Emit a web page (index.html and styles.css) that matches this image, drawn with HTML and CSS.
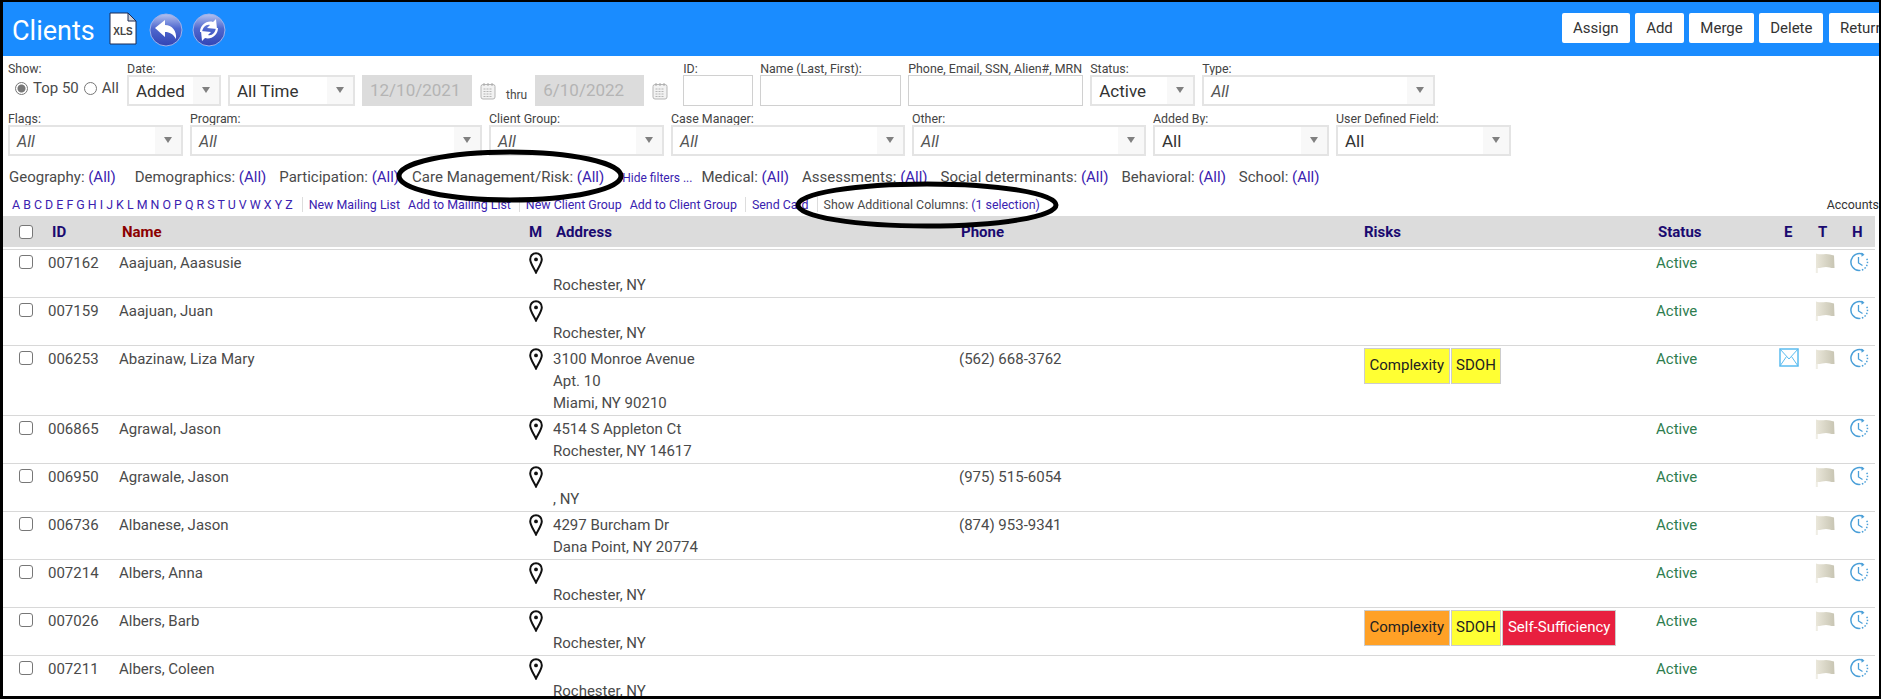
FILE: index.html
```
<!DOCTYPE html>
<html lang="en">

<head>
  <meta charset="UTF-8" />
  <title>Clients</title>
  <link rel="stylesheet" href="styles.css">
</head>

<body>
  <svg class="defs" width="0" height="0">
    <defs>
      <linearGradient id="ball" x1="0" y1="0" x2="0" y2="1">
        <stop offset="0" stop-color="#b4c3f0" />
        <stop offset="0.45" stop-color="#4f68cf" />
        <stop offset="1" stop-color="#3244b4" />
      </linearGradient>
      <linearGradient id="cloth" x1="0" y1="0" x2="1" y2="0">
        <stop offset="0" stop-color="#eae7da" />
        <stop offset="1" stop-color="#c8c5b3" />
      </linearGradient>
      <symbol id="pin" viewBox="0 0 14 22">
        <path d="M7 1.2C3.6 1.2 1.2 3.9 1.2 7.2c0 4 3.7 8.600 5.800 13.300 2.100-4.700 5.800-9.300 5.800-13.300C12.800 3.900 10.400 1.200 7 1.200z" fill="none" stroke="#111" stroke-width="2" />
        <circle cx="7" cy="7.400" r="1.900" fill="#111" />
      </symbol>
      <symbol id="flag" viewBox="0 0 22 22">
        <path d="M2 1.500c5 1.500 7 .5 10 .5 3 0 5 1 8 1.500L20.500 16c-3 .5-5.500-1-8.500-1-3 0-6 1.500-10 1z" fill="url(#cloth)" />
        <path d="M2.800 16v5" stroke="#efede4" stroke-width="2" />
      </symbol>
      <symbol id="clock" viewBox="0 0 20 20">
        <path d="M14 2.300A8.500 8.500 0 1 0 10 18.500" fill="none" stroke="#4a9fd8" stroke-width="1.500" />
        <path d="M10 18.500A8.500 8.500 0 0 0 17.500 6" fill="none" stroke="#4a9fd8" stroke-width="1.500" stroke-dasharray="1.500 1.500" />
        <path d="M12.500 .5L15.500 2.800 12.500 4.800z" fill="#4a9fd8" />
        <path d="M9.500 5v6l4 2.500" fill="none" stroke="#4a9fd8" stroke-width="1.300" />
      </symbol>
      <symbol id="cal" viewBox="0 0 16 18">
        <rect x="1" y="2.500" width="14" height="14.500" rx="2" fill="#f2f2f2" stroke="#b5b5b5" />
        <path d="M4 1v3M8 1v3M12 1v3" stroke="#aaa" />
        <path d="M3.500 7h9M3.500 9.500h9M3.500 12h9M3.500 14.500h9" stroke="#b5b5b5" stroke-dasharray="2 1" />
      </symbol>
    </defs>
  </svg>

  <div class="frame">
    <div class="topbar">
      <div class="page-title">Clients</div>
      <svg class="xls-icon" width="28" height="33" viewBox="0 0 28 33">
        <path d="M1 1h18l8 8v23H1z" fill="#fff" stroke="#1b2a55" />
        <path d="M19 1v8h8z" fill="#c9ced8" stroke="#1b2a55" />
        <text x="14" y="23" text-anchor="middle" class="xls-text">XLS</text>
      </svg>
      <svg class="round-icon" width="34" height="34" viewBox="0 0 34 34">
        <circle cx="17" cy="17" r="16" fill="url(#ball)" stroke="#9fb2ea" />
        <path d="M6 15l10-8v5c7 0 12 6 11 14-3-5-6-7-11-7v5z" fill="#fff" />
      </svg>
      <svg class="round-icon" width="34" height="34" viewBox="0 0 34 34">
        <circle cx="17" cy="17" r="16" fill="url(#ball)" stroke="#9fb2ea" />
        <path d="M8 19c0-7 7-12 13-10l3-3 1 10-10-1 3-3c-4-1-7 2-8 7z" fill="#fff" />
        <path d="M26 15c0 7-7 12-13 10l-3 3-1-10 10 1-3 3c4 1 7-2 8-7z" fill="#fff" />
      </svg>
      <div class="actions">
        <a class="btn">Assign</a>
        <a class="btn">Add</a>
        <a class="btn">Merge</a>
        <a class="btn">Delete</a>
        <a class="btn">Return</a>
      </div>
    </div>

    <div class="filters">
      <div class="filter-row">
        <div class="field w-show">
          <label>Show:</label>
          <div class="radios">
            <span class="radio on"></span><span>Top 50</span>
            <span class="radio"></span><span>All</span>
          </div>
        </div>
        <div class="field">
          <label>Date:</label>
          <div class="controls">
            <div class="drop w-added"><span>Added</span><i></i></div>
            <div class="drop w-time"><span>All Time</span><i></i></div>
            <div class="date-input w-from">12/10/2021</div>
            <svg class="cal" width="16" height="18"><use href="#cal" /></svg>
            <span class="thru">thru</span>
            <div class="date-input w-to">6/10/2022</div>
            <svg class="cal" width="16" height="18"><use href="#cal" /></svg>
          </div>
        </div>
        <div class="field w-id">
          <label>ID:</label>
          <div class="text-input"></div>
        </div>
        <div class="field w-name">
          <label>Name (Last, First):</label>
          <div class="text-input"></div>
        </div>
        <div class="field w-phone">
          <label>Phone, Email, SSN, Alien#, MRN</label>
          <div class="text-input"></div>
        </div>
        <div class="field w-status">
          <label>Status:</label>
          <div class="drop"><span>Active</span><i></i></div>
        </div>
        <div class="field w-type">
          <label>Type:</label>
          <div class="drop"><em>All</em><i></i></div>
        </div>
      </div>

      <div class="filter-row">
        <div class="field w-flags">
          <label>Flags:</label>
          <div class="drop"><em>All</em><i></i></div>
        </div>
        <div class="field w-program">
          <label>Program:</label>
          <div class="drop"><em>All</em><i></i></div>
        </div>
        <div class="field w-group">
          <label>Client Group:</label>
          <div class="drop"><em>All</em><i></i></div>
        </div>
        <div class="field w-manager">
          <label>Case Manager:</label>
          <div class="drop"><em>All</em><i></i></div>
        </div>
        <div class="field w-other">
          <label>Other:</label>
          <div class="drop"><em>All</em><i></i></div>
        </div>
        <div class="field w-added-by">
          <label>Added By:</label>
          <div class="drop"><span>All</span><i></i></div>
        </div>
        <div class="field w-udf">
          <label>User Defined Field:</label>
          <div class="drop"><span>All</span><i></i></div>
        </div>
      </div>
    </div>

    <div class="facets">
      <span class="first-facet">Geography: <a>(All)</a></span>
      <span>Demographics: <a>(All)</a></span>
      <span>Participation: <a>(All)</a></span>
      <span>Care Management/Risk: <a>(All)</a></span>
      <a class="hide-link">Hide filters ...</a>
      <span>Medical: <a>(All)</a></span>
      <span>Assessments: <a>(All)</a></span>
      <span>Social determinants: <a>(All)</a></span>
      <span>Behavioral: <a>(All)</a></span>
      <span>School: <a>(All)</a></span>
    </div>

    <div class="links">
      <a class="alpha">A B C D E F G H I J K L M N O P Q R S T U V W X Y Z</a>
      <a class="sep">New Mailing List</a>
      <a>Add to Mailing List</a>
      <a class="sep">New Client Group</a>
      <a>Add to Client Group</a>
      <a class="sep">Send Card</a>
      <span class="sep">Show Additional Columns: <a>(1 selection)</a></span>
      <span class="accounts">Accounts:</span>
    </div>

    <table class="clients">
      <colgroup>
        <col class="col-chk"><col class="col-id"><col class="col-name"><col class="col-m"><col class="col-addr"><col class="col-phone"><col class="col-risk"><col class="col-status"><col class="col-e"><col class="col-t"><col class="col-h">
      </colgroup>
      <thead>
        <tr>
          <th class="chk"><span class="box"></span></th>
          <th class="th-id">ID</th>
          <th class="th-name sorted">Name</th>
          <th>M</th>
          <th class="th-addr">Address</th>
          <th class="th-phone">Phone</th>
          <th class="th-risk">Risks</th>
          <th class="th-status">Status</th>
          <th class="th-e">E</th>
          <th class="th-t">T</th>
          <th class="th-h">H</th>
        </tr>
      </thead>
      <tbody>
        <tr>
          <td class="chk"><span class="box"></span></td><td>007162</td><td>Aaajuan, Aaasusie</td>
          <td><svg class="pin" width="14" height="22"><use href="#pin" /></svg></td>
          <td><br>Rochester, NY</td><td class="phone"></td><td class="risk"></td><td class="status">Active</td><td></td>
          <td class="ico"><svg width="22" height="22"><use href="#flag" /></svg></td>
          <td class="ico"><svg width="20" height="20"><use href="#clock" /></svg></td>
        </tr>
        <tr>
          <td class="chk"><span class="box"></span></td><td>007159</td><td>Aaajuan, Juan</td>
          <td><svg class="pin" width="14" height="22"><use href="#pin" /></svg></td>
          <td><br>Rochester, NY</td><td class="phone"></td><td class="risk"></td><td class="status">Active</td><td></td>
          <td class="ico"><svg width="22" height="22"><use href="#flag" /></svg></td>
          <td class="ico"><svg width="20" height="20"><use href="#clock" /></svg></td>
        </tr>
        <tr>
          <td class="chk"><span class="box"></span></td><td>006253</td><td>Abazinaw, Liza Mary</td>
          <td><svg class="pin" width="14" height="22"><use href="#pin" /></svg></td>
          <td>3100 Monroe Avenue<br>Apt. 10<br>Miami, NY 90210</td><td class="phone">(562) 668-3762</td>
          <td class="risk"><div class="chips"><span class="chip yellow">Complexity</span><span class="chip yellow">SDOH</span></div></td>
          <td class="status">Active</td>
          <td class="ico">
            <svg width="20" height="19" viewBox="0 0 20 19">
              <rect x="1" y="1" width="18" height="17" fill="none" stroke="#5bbcf0" stroke-width="1.500" />
              <path d="M1 1l9 10 9-10M1 18l6.500-9.500M19 18l-6.500-9.500" fill="none" stroke="#5bbcf0" />
            </svg>
          </td>
          <td class="ico"><svg width="22" height="22"><use href="#flag" /></svg></td>
          <td class="ico"><svg width="20" height="20"><use href="#clock" /></svg></td>
        </tr>
        <tr>
          <td class="chk"><span class="box"></span></td><td>006865</td><td>Agrawal, Jason</td>
          <td><svg class="pin" width="14" height="22"><use href="#pin" /></svg></td>
          <td>4514 S Appleton Ct<br>Rochester, NY 14617</td><td class="phone"></td><td class="risk"></td><td class="status">Active</td><td></td>
          <td class="ico"><svg width="22" height="22"><use href="#flag" /></svg></td>
          <td class="ico"><svg width="20" height="20"><use href="#clock" /></svg></td>
        </tr>
        <tr>
          <td class="chk"><span class="box"></span></td><td>006950</td><td>Agrawale, Jason</td>
          <td><svg class="pin" width="14" height="22"><use href="#pin" /></svg></td>
          <td><br>, NY</td><td class="phone">(975) 515-6054</td><td class="risk"></td><td class="status">Active</td><td></td>
          <td class="ico"><svg width="22" height="22"><use href="#flag" /></svg></td>
          <td class="ico"><svg width="20" height="20"><use href="#clock" /></svg></td>
        </tr>
        <tr>
          <td class="chk"><span class="box"></span></td><td>006736</td><td>Albanese, Jason</td>
          <td><svg class="pin" width="14" height="22"><use href="#pin" /></svg></td>
          <td>4297 Burcham Dr<br>Dana Point, NY 20774</td><td class="phone">(874) 953-9341</td><td class="risk"></td><td class="status">Active</td><td></td>
          <td class="ico"><svg width="22" height="22"><use href="#flag" /></svg></td>
          <td class="ico"><svg width="20" height="20"><use href="#clock" /></svg></td>
        </tr>
        <tr>
          <td class="chk"><span class="box"></span></td><td>007214</td><td>Albers, Anna</td>
          <td><svg class="pin" width="14" height="22"><use href="#pin" /></svg></td>
          <td><br>Rochester, NY</td><td class="phone"></td><td class="risk"></td><td class="status">Active</td><td></td>
          <td class="ico"><svg width="22" height="22"><use href="#flag" /></svg></td>
          <td class="ico"><svg width="20" height="20"><use href="#clock" /></svg></td>
        </tr>
        <tr>
          <td class="chk"><span class="box"></span></td><td>007026</td><td>Albers, Barb</td>
          <td><svg class="pin" width="14" height="22"><use href="#pin" /></svg></td>
          <td><br>Rochester, NY</td><td class="phone"></td>
          <td class="risk"><div class="chips"><span class="chip orange">Complexity</span><span class="chip yellow">SDOH</span><span class="chip red">Self-Sufficiency</span></div></td>
          <td class="status">Active</td><td></td>
          <td class="ico"><svg width="22" height="22"><use href="#flag" /></svg></td>
          <td class="ico"><svg width="20" height="20"><use href="#clock" /></svg></td>
        </tr>
        <tr>
          <td class="chk"><span class="box"></span></td><td>007211</td><td>Albers, Coleen</td>
          <td><svg class="pin" width="14" height="22"><use href="#pin" /></svg></td>
          <td><br>Rochester, NY</td><td class="phone"></td><td class="risk"></td><td class="status">Active</td><td></td>
          <td class="ico"><svg width="22" height="22"><use href="#flag" /></svg></td>
          <td class="ico"><svg width="20" height="20"><use href="#clock" /></svg></td>
        </tr>
      </tbody>
    </table>

    <!-- hand drawn marks on top of the screen -->
    <svg class="marks" width="1881" height="699">
      <ellipse cx="510" cy="176" rx="111" ry="24" />
      <ellipse cx="927" cy="205" rx="129" ry="21" />
    </svg>
  </div>
</body>

</html>
```

FILE: styles.css
```
* {
  box-sizing: border-box;
}

body {
  margin: 0;
  padding: 0;
  background: #fff;
  font-family: "Roboto", "Liberation Sans", sans-serif;
  font-size: 15px;
  color: #4a4a4a;
}

a {
  color: #3a22b0;
  text-decoration: none;
}

.defs {
  position: absolute;
}

.frame {
  position: relative;
  width: 1881px;
  height: 699px;
  border-style: solid;
  border-color: #000;
  border-width: 2px 2px 3px 3px;
  overflow: hidden;
}

.marks {
  position: absolute;
  top: -2px;
  left: -3px;
  fill: none;
  stroke: #000;
  stroke-width: 5;
}

/* top bar */
.topbar {
  display: flex;
  align-items: flex-start;
  height: 54px;
  padding-left: 9px;
  background-color: #1a8cff;
}

.page-title {
  width: 97px;
  margin-top: 10px;
  font-size: 27px;
  line-height: 38px;
  color: #fff;
}

.xls-icon {
  flex: none;
  margin-top: 10px;
}

.xls-text {
  font-family: "Liberation Sans", sans-serif;
  font-size: 10px;
  font-weight: bold;
  fill: #444;
}

.round-icon {
  flex: none;
  margin-top: 11px;
  margin-left: 9px;
}

.xls-icon + .round-icon {
  margin-left: 12px;
}

.actions {
  flex: none;
  display: flex;
  gap: 5.5px;
  width: 317px;
  margin-top: 11px;
  margin-left: auto;
  overflow: hidden;
}

.btn {
  flex: none;
  height: 30px;
  padding: 0 11px;
  line-height: 30px;
  background-color: #fff;
  border-radius: 2px;
  color: #333;
}

/* filter block */
.filters {
  padding: 4px 0 0 5px;
}

.filter-row {
  display: flex;
  gap: 7px;
  height: 50px;
}

.field {
  flex: none;
}

.field label {
  display: block;
  height: 15px;
  padding-top: 1px;
  font-size: 12.4px;
  line-height: 15px;
  color: #444;
  white-space: nowrap;
}

.controls {
  display: flex;
  align-items: center;
  gap: 7px;
}

.radios {
  display: flex;
  align-items: center;
  gap: 5px;
  height: 26px;
  padding-left: 7px;
  font-size: 15px;
}

.radio {
  width: 13px;
  height: 13px;
  border: 1px solid #777;
  border-radius: 50%;
  background: #fff;
}

.radio.on {
  border-color: #777;
  background: radial-gradient(circle, #777 0, #777 3.5px, #fff 4.5px);
}

.drop {
  position: relative;
  height: 31px;
  padding-left: 7px;
  line-height: 28px;
  font-size: 17px;
  color: #333;
  background-color: #fff;
  border: 2px solid #e4e4e4;
}

.drop em {
  font-size: 16px;
  color: #555;
}

.drop i {
  position: absolute;
  top: 0;
  right: 0;
  bottom: 0;
  width: 26px;
  background-color: #f8f8f8;
}

.drop i::after {
  content: "";
  position: absolute;
  top: 10px;
  left: 9px;
  border-style: solid;
  border-color: #808080 transparent transparent;
  border-width: 6px 4px 0;
}

.date-input {
  height: 31px;
  padding-left: 8px;
  line-height: 31px;
  font-size: 17px;
  color: #b4b4b4;
  background-color: #dcdcdc;
}

.text-input {
  height: 31px;
  background-color: #fff;
  border: 1px solid #d0d0d0;
}

.cal {
  flex: none;
  margin-left: 1px;
}

.thru {
  margin: 8px 1px 0 3px;
  font-size: 12px;
}

.w-show { width: 112px; }
.w-added { width: 94px; }
.w-time { width: 127px; }
.w-from { width: 110px; }
.w-to { width: 109px; }
.w-id { width: 70px; margin-left: 8px; }
.w-name { width: 141px; }
.w-phone { width: 175px; }
.w-status { width: 105px; }
.w-type { width: 233px; }
.w-flags { width: 175px; }
.w-program { width: 292px; }
.w-group { width: 175px; }
.w-manager { width: 234px; }
.w-other { width: 234px; }
.w-added-by { width: 176px; }
.w-udf { width: 175px; }

/* facet links */
.facets {
  display: flex;
  align-items: center;
  gap: 13px;
  height: 30px;
  padding: 4px 0 0 6px;
  white-space: nowrap;
}

.first-facet {
  margin-right: 6px;
}

.hide-link {
  margin: 1px -4px 0 5px;
  font-size: 12px;
}

.links {
  display: flex;
  align-items: center;
  gap: 8px;
  height: 24px;
  padding: 4px 0 0 9px;
  font-size: 12.4px;
  white-space: nowrap;
}

.links .sep {
  padding-left: 6px;
  border-left: 1px solid #ddd;
}

.alpha {
  padding-right: 1px;
}

.accounts {
  position: absolute;
  right: -3px;
  top: 195px;
  color: #333;
}

/* table */
.clients {
  width: 1872px;
  margin-top: 2px;
  table-layout: fixed;
  border-collapse: separate;
  border-spacing: 0;
}

.col-chk { width: 45px; }
.col-id { width: 71px; }
.col-name { width: 410px; }
.col-m { width: 24px; }
.col-addr { width: 405px; }
.col-phone { width: 404px; }
.col-risk { width: 292px; }
.col-status { width: 123px; }
.col-e { width: 35px; }
.col-t { width: 35px; }
.col-h { width: 28px; }

.clients th {
  height: 34px;
  padding: 0 0 2px;
  text-align: left;
  font-weight: bold;
  color: #1a0a70;
  background-color: #dcdcdc;
  background-clip: content-box;
  border-bottom: 1px solid #d8d8d8;
}

.clients th.sorted {
  color: #8b0000;
}

.th-id { text-indent: 4px; }
.th-name { text-indent: 3px; }
.th-addr { text-indent: 3px; }
.th-phone { text-indent: 3px; }
.th-risk { text-indent: 2px; }
.th-status { text-indent: 4px; }
.th-e { text-indent: 7px; }
.th-t { text-indent: 6px; }
.th-h { text-indent: 5px; }

.clients td {
  padding: 2px 0 1px;
  vertical-align: top;
  line-height: 22px;
  border-bottom: 1px solid #d8d8d8;
  white-space: nowrap;
}

.box {
  display: block;
  width: 14px;
  height: 14px;
  margin: 0 0 0 16px;
  background-color: #fff;
  border: 1px solid #777;
  border-radius: 3px;
}

td .box {
  margin-top: 3px;
}

td svg {
  display: block;
}

.phone {
  padding-left: 1px !important;
}

.risk {
  padding-left: 2px !important;
}

.status {
  padding-left: 2px !important;
  color: #2e7d4f;
}

.ico {
  padding-left: 2px !important;
}

.chips {
  display: flex;
  gap: 1px;
}

.chip {
  height: 36px;
  padding: 0 4.5px;
  line-height: 32px;
  color: #222;
  border: 1px solid #ccc;
}

.yellow { background-color: #ffff33; }
.orange { background-color: #ffa126; }
.red { background-color: #e81f3f; color: #fff; }
```
